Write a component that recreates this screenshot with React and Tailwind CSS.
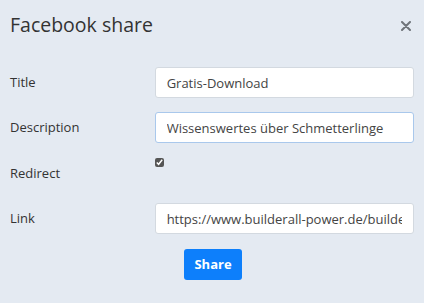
const Row = ({ label, children }) => (
  <div className="flex items-center h-[31px]">
    <div className="w-[145px] text-[13px] text-[#333]">{label}</div>
    {children}
  </div>
);

const App = () => {
  return (
    <div
      className="w-[424px] h-[303px] bg-[#e4eaf2] text-[#333] overflow-hidden"
      style={{ fontFamily: '"Open Sans", "Noto Sans", sans-serif' }}
    >
      <div className="flex items-center justify-between pl-[10px] pr-[13px] h-[50px]">
        <h1 className="text-[19.5px] text-[#333] leading-none">Facebook share</h1>
        <button className="w-[10px] h-[10px] mt-[1px]">
          <svg viewBox="0 0 10 10" className="w-[10px] h-[10px]">
            <path d="M1 1L9 9M9 1L1 9" stroke="#6f747a" strokeWidth="2" strokeLinecap="round" />
          </svg>
        </button>
      </div>
      <div className="px-[10px] pt-[17px] flex flex-col gap-[14px]">
        <Row label="Title">
          <input
            readOnly
            value="Gratis-Download"
            className="w-[260px] h-[31px] bg-white border border-[#d3d9e0] rounded-[3px] px-[11px] text-[13px] text-[#444] outline-none"
          />
        </Row>
        <Row label="Description">
          <input
            readOnly
            value="Wissenswertes über Schmetterlinge"
            className="w-[260px] h-[31px] bg-white border border-[#a9c8ec] rounded-[3px] px-[11px] text-[13px] text-[#444] outline-none"
          />
        </Row>
        <div className="flex h-[31px]">
          <div className="w-[145px] text-[13px] self-end pb-[5px]">Redirect</div>
          <input type="checkbox" defaultChecked className="w-[9px] h-[9px] mt-[1px] accent-[#555]" />
        </div>
        <div className="pt-[1px]">
          <Row label="Link">
            <input
              readOnly
              value="https://www.builderall-power.de/builderall"
              className="w-[260px] h-[31px] bg-white border border-[#d3d9e0] rounded-[3px] px-[11px] text-[13px] text-[#444] outline-none"
            />
          </Row>
        </div>
        <div className="pl-[174px] pt-[1px]">
          <button className="w-[58px] h-[31px] bg-[#0d7ffb] rounded-[3px] text-white text-[13px] font-bold">
            Share
          </button>
        </div>
      </div>
    </div>
  );
};

export default App;
